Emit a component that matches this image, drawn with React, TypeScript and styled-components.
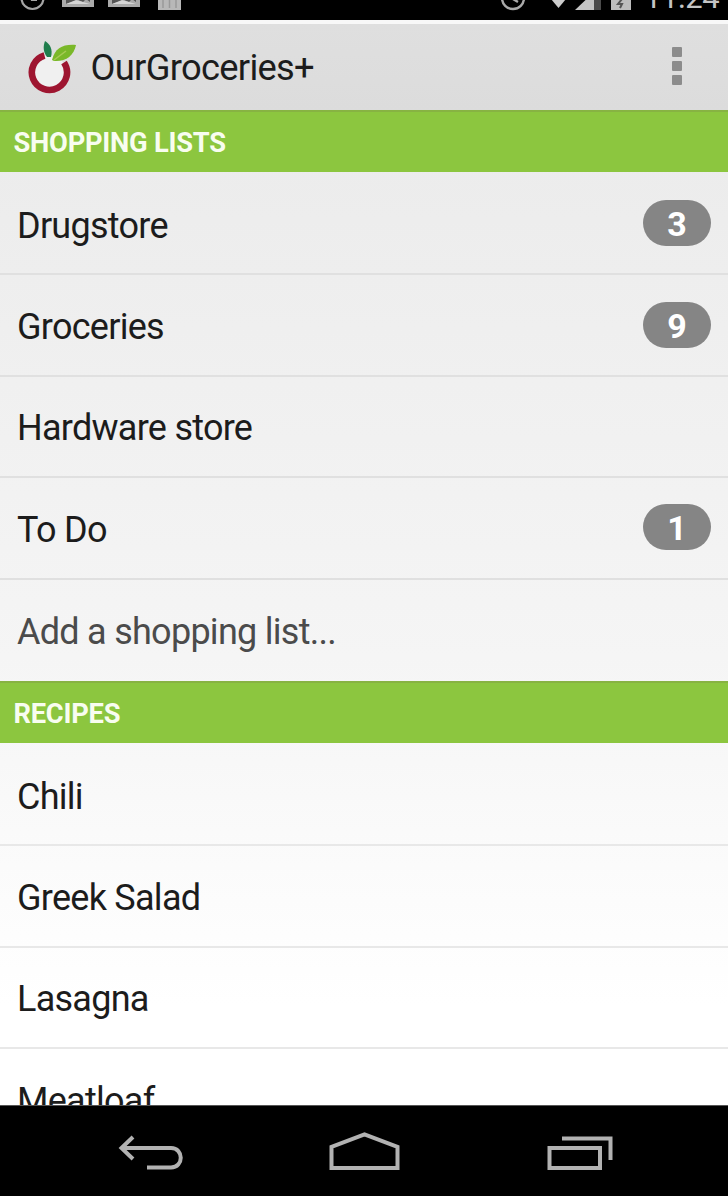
import React from 'react';
import styled, { createGlobalStyle } from 'styled-components';

const GlobalStyle = createGlobalStyle`
  * { box-sizing: border-box; }
  html, body { margin: 0; padding: 0; background: #000; }
`;

const Screen = styled.div`
  display: flex;
  flex-direction: column;
  width: 728px;
  height: 1196px;
  overflow: hidden;
  background: #000;
  color: #1c1c1c;
  font-family: Roboto, sans-serif;
`;

const StatusBar = styled.header`
  display: flex;
  justify-content: space-between;
  flex: 0 0 20px;
  height: 20px;
  overflow: hidden;
  background: #000;
`;

const StatusGroup = styled.div`
  display: flex;
  align-items: flex-start;
  height: 20px;
`;

const Clock = styled.span`
  width: 84px;
  margin-top: -18px;
  color: #c4c4c4;
  font-size: 31px;
  letter-spacing: -0.4px;
  line-height: 31px;
  white-space: nowrap;
`;

const AppBar = styled.div`
  display: flex;
  align-items: center;
  flex: 0 0 90px;
  padding: 0 46px 0 27px;
  border-top: 4px solid #f8f8f8;
  background: linear-gradient(#dfdfdf, #dcdcdc);
`;

const AppTitle = styled.h1`
  flex: 1;
  margin: 1px 0 0 12.5px;
  font-size: 36.3px;
  font-weight: 400;
  letter-spacing: -0.7px;
  line-height: 42px;
`;

const OverflowButton = styled.div`
  display: flex;
  flex-direction: column;
  gap: 4px;
  width: 10px;
  margin-bottom: 2px;
`;

const Dot = styled.i`
  width: 10px;
  height: 10px;
  border-radius: 1px;
  background: #8c8c8c;
`;

const Content = styled.main`
  flex: 0 0 995px;
  height: 995px;
  overflow: hidden;
  background: linear-gradient(#ebebeb, #f5f5f5 55%, #fff 90%);
`;

const SectionHeader = styled.h2`
  display: flex;
  align-items: center;
  height: 62px;
  margin: 0;
  padding: 1px 0 0 13.5px;
  border-top: 2px solid #87b342;
  background: #8cc63f;
  color: #f8fdf0;
  font-size: 27.3px;
  font-weight: 700;
  letter-spacing: -0.25px;
  line-height: 30px;
`;

const RowList = styled.div<{ $height?: number }>`
  height: ${({ $height }) => ($height ? `${$height}px` : 'auto')};
  padding-top: 2px;
  overflow: hidden;
`;

const Row = styled.div<{ $last?: boolean; $muted?: boolean; $line?: string }>`
  display: flex;
  align-items: center;
  justify-content: space-between;
  height: 101.4px;
  padding: 4px 17px 0 17px;
  border-bottom: ${({ $last }) => ($last ? '0' : '2px')} solid ${({ $line }) => $line ?? '#e0e0e0'};
  color: ${({ $muted }) => ($muted ? '#4b4b4b' : '#1c1c1c')};
  font-size: 36px;
  letter-spacing: -0.73px;
  line-height: 42px;
  white-space: nowrap;
`;

const Badge = styled.span`
  display: flex;
  align-items: center;
  justify-content: center;
  width: 68px;
  height: 46px;
  margin-bottom: 5px;
  padding-top: 2px;
  border-radius: 23px;
  background: #858585;
  color: #fff;
  font-size: 34px;
  font-weight: 700;
  letter-spacing: 0;
  line-height: 44px;
`;

const NavBar = styled.nav`
  flex: 0 0 91px;
  display: flex;
  justify-content: center;
  border-top: 1px solid #555;
  background: #000;
`;

const Icon = styled.svg`
  display: block;
  flex: none;
`;

const lists = [
  { name: 'Drugstore', count: 3 },
  { name: 'Groceries', count: 9 },
  { name: 'Hardware store' },
  { name: 'To Do', count: 1 },
];

const recipes = ['Chili', 'Greek Salad', 'Lasagna', 'Meatloaf'];

const AlarmIcon = () => (
  <Icon width="26" height="20" viewBox="0 0 26 20" fill="none" stroke="#aaa" strokeWidth="2.4">
    <circle cx="13" cy="-2" r="11" />
    <path d="M13 -3v2l5 3" />
  </Icon>
);

const LeftStatus = () => (
  <Icon width="200" height="20" viewBox="0 0 200 20">
    <g fill="none" stroke="#a5a5a5" strokeWidth="2.2">
      <circle cx="32.500" cy="-2" r="11" />
      <path d="M32 -3v3h5" />
    </g>
    <path d="M62 -2H94V7H62Z M108 -2H140V7H108Z" fill="#aaa" />
    <path d="M66 -2H90V2L86 -1L83 2L78 0L66 4Z M112 -2H136V2L132 -1L129 2L124 0L112 4Z" fill="#555" />
    <path d="M66 4L76 0L90 4Z M112 4L122 0L136 4Z" fill="#d5d5d5" />
    <path d="M158 -2H181V10H158Z" fill="#b8b8b8" />
    <path d="M163 -2V8M169.500 -2V8M176 -2V8" stroke="#999" strokeWidth="1.5" />
  </Icon>
);

const SignalIcons = () => (
  <Icon width="118" height="20" viewBox="526 0 118 20">
    <path d="M551 -1H566L558.500 8Z" fill="#ccc" />
    <path d="M575 10L594 -8V10Z" fill="#c4c4c4" />
    <path d="M594 -8H601V10H594Z" fill="#4b4b4b" />
    <path d="M611 -2H631V10H611Z" fill="#bdbdbd" />
    <path d="M622 -1L618 4H622L620 8" stroke="#555" strokeWidth="2" fill="none" />
  </Icon>
);

const Logo = () => (
  <Icon width="51" height="56" viewBox="28 38 51 56">
    <circle cx="50.500" cy="71.500" r="17" fill="#f0f0f0" />
    <path d="M45.500 54.500A17.600 17.600 0 1 0 65 61.500" fill="none" stroke="#9e1530" strokeWidth="6.600" />
    <path d="M46 40C51 43 54 48 52 56H48C44 51 44 45 46 40Z" fill="#1f7d4c" />
    <path d="M53 59C56 47 64 43 77 44C75 55 66 61 55 60Z" fill="#7ab829" />
    <path d="M55 59L67 50" stroke="#a7cb55" strokeWidth="1.500" />
  </Icon>
);

const NavIcons = () => (
  <Icon width="728" height="90" viewBox="0 1106 728 90" fill="none" stroke="#b2b2b2" strokeWidth="4">
    <path d="M133 1137L121.500 1148L133 1159M122 1148H171C184 1148 184 1167.500 171 1167.500H147" />
    <path d="M331.500 1168V1147L364.500 1134.500L397.500 1147V1168Z" />
    <path d="M549.500 1148H600V1168H549.500Z M562 1138.500H610.500V1160" />
  </Icon>
);

export default function App() {
  return (
    <Screen>
      <GlobalStyle />
      <StatusBar>
        <StatusGroup>
          <LeftStatus />
        </StatusGroup>
        <StatusGroup>
          <AlarmIcon />
          <SignalIcons />
          <Clock>11:24</Clock>
        </StatusGroup>
      </StatusBar>
      <AppBar>
        <Logo />
        <AppTitle>OurGroceries+</AppTitle>
        <OverflowButton>
          <Dot />
          <Dot />
          <Dot />
        </OverflowButton>
      </AppBar>
      <Content>
        <SectionHeader>SHOPPING LISTS</SectionHeader>
        <RowList $height={509}>
          {lists.map(({ name, count }) => (
            <Row key={name}>
              <span>{name}</span>
              {count !== undefined && <Badge>{count}</Badge>}
            </Row>
          ))}
          <Row $muted $last>Add a shopping list...</Row>
        </RowList>
        <SectionHeader>RECIPES</SectionHeader>
        <RowList>
          {recipes.map((name) => (
            <Row key={name} $line="#e8e8e8">{name}</Row>
          ))}
        </RowList>
      </Content>
      <NavBar>
        <NavIcons />
      </NavBar>
    </Screen>
  );
}
